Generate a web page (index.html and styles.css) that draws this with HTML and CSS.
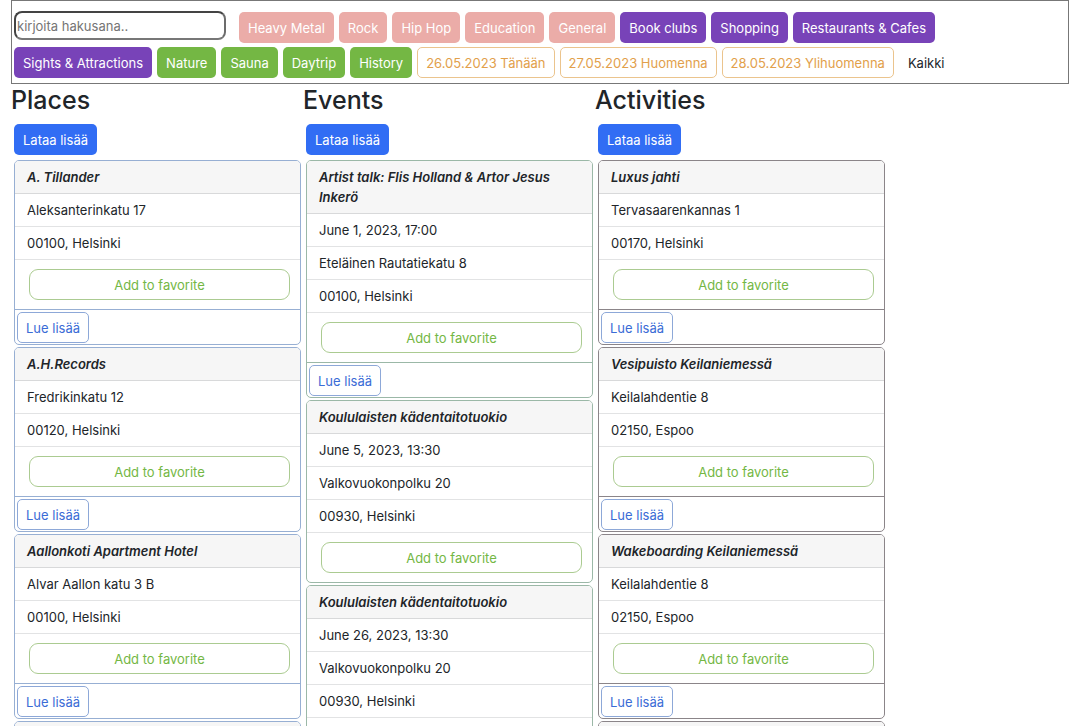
FILE: index.html
```html
<!DOCTYPE html>
<html lang="fi">
<head>
<meta charset="utf-8">
<title>Places, Events, Activities</title>
<link rel="stylesheet" href="styles.css">
</head>
<body>
<main class="page">
  <form class="filters">
    <input class="search" type="text" placeholder="kirjoita hakusana.." aria-label="Hakusana">
    <button type="button" class="btn pink">Heavy Metal</button>
    <button type="button" class="btn pink">Rock</button>
    <button type="button" class="btn pink">Hip Hop</button>
    <button type="button" class="btn pink">Education</button>
    <button type="button" class="btn pink">General</button>
    <button type="button" class="btn purple">Book clubs</button>
    <button type="button" class="btn purple">Shopping</button>
    <button type="button" class="btn purple">Restaurants &amp; Cafes</button>
    <button type="button" class="btn purple">Sights &amp; Attractions</button>
    <button type="button" class="btn green">Nature</button>
    <button type="button" class="btn green">Sauna</button>
    <button type="button" class="btn green">Daytrip</button>
    <button type="button" class="btn green">History</button>
    <button type="button" class="btn date">26.05.2023 Tänään</button>
    <button type="button" class="btn date">27.05.2023 Huomenna</button>
    <button type="button" class="btn date">28.05.2023 Ylihuomenna</button>
    <button type="button" class="btn plain">Kaikki</button>
  </form>
  <div class="columns">
    <section class="column places">
      <h2>Places</h2>
      <button type="button" class="btn load">Lataa lisää</button>
      <div class="cards">
        <article class="card">
          <h3>A. Tillander</h3>
          <p>Aleksanterinkatu 17</p>
          <p>00100, Helsinki</p>
          <div class="favorite"><button type="button" class="btn fav">Add to favorite</button></div>
          <footer><button type="button" class="btn more">Lue lisää</button></footer>
        </article>
        <article class="card">
          <h3>A.H.Records</h3>
          <p>Fredrikinkatu 12</p>
          <p>00120, Helsinki</p>
          <div class="favorite"><button type="button" class="btn fav">Add to favorite</button></div>
          <footer><button type="button" class="btn more">Lue lisää</button></footer>
        </article>
        <article class="card">
          <h3>Aallonkoti Apartment Hotel</h3>
          <p>Alvar Aallon katu 3 B</p>
          <p>00100, Helsinki</p>
          <div class="favorite"><button type="button" class="btn fav">Add to favorite</button></div>
          <footer><button type="button" class="btn more">Lue lisää</button></footer>
        </article>
        <article class="card"><h3></h3></article>
      </div>
    </section>
    <section class="column events">
      <h2>Events</h2>
      <button type="button" class="btn load">Lataa lisää</button>
      <div class="cards">
        <article class="card">
          <h3>Artist talk: Flis Holland &amp; Artor Jesus Inkerö</h3>
          <p>June 1, 2023, 17:00</p>
          <p>Eteläinen Rautatiekatu 8</p>
          <p>00100, Helsinki</p>
          <div class="favorite"><button type="button" class="btn fav">Add to favorite</button></div>
          <footer><button type="button" class="btn more">Lue lisää</button></footer>
        </article>
        <article class="card">
          <h3>Koululaisten kädentaitotuokio</h3>
          <p>June 5, 2023, 13:30</p>
          <p>Valkovuokonpolku 20</p>
          <p>00930, Helsinki</p>
          <div class="favorite"><button type="button" class="btn fav">Add to favorite</button></div>
        </article>
        <article class="card">
          <h3>Koululaisten kädentaitotuokio</h3>
          <p>June 26, 2023, 13:30</p>
          <p>Valkovuokonpolku 20</p>
          <p>00930, Helsinki</p>
          <div class="favorite"></div>
        </article>
      </div>
    </section>
    <section class="column activities">
      <h2>Activities</h2>
      <button type="button" class="btn load">Lataa lisää</button>
      <div class="cards">
        <article class="card">
          <h3>Luxus jahti</h3>
          <p>Tervasaarenkannas 1</p>
          <p>00170, Helsinki</p>
          <div class="favorite"><button type="button" class="btn fav">Add to favorite</button></div>
          <footer><button type="button" class="btn more">Lue lisää</button></footer>
        </article>
        <article class="card">
          <h3>Vesipuisto Keilaniemessä</h3>
          <p>Keilalahdentie 8</p>
          <p>02150, Espoo</p>
          <div class="favorite"><button type="button" class="btn fav">Add to favorite</button></div>
          <footer><button type="button" class="btn more">Lue lisää</button></footer>
        </article>
        <article class="card">
          <h3>Wakeboarding Keilaniemessä</h3>
          <p>Keilalahdentie 8</p>
          <p>02150, Espoo</p>
          <div class="favorite"><button type="button" class="btn fav">Add to favorite</button></div>
          <footer><button type="button" class="btn more">Lue lisää</button></footer>
        </article>
        <article class="card"><h3></h3></article>
      </div>
    </section>
  </div>
</main>
</body>
</html>
```
FILE: styles.css
```css
* {
  box-sizing: border-box;
}

html {
  overflow: hidden;
}

body {
  height: 100vh;
  margin: 0;
  overflow: hidden;
  background: #fff;
  color: #212529;
  font-family: Inter, "Liberation Sans", sans-serif;
  font-size: 13px;
  line-height: 20px;
}

.page {
  padding: 0 14px 0 11px;
}

.filters {
  display: flex;
  flex-wrap: wrap;
  align-items: flex-end;
  gap: 4px 5px;
  padding: 10px 100px 5px 2px;
  border: 1px solid #777;
}

.search {
  width: 212px;
  height: 29px;
  margin: 0 8px 3px 0;
  padding: 0 1px;
  border: 2px solid;
  border-color: #444 #6c6c6c #777 #444;
  border-radius: 8px;
  background: #fff;
  font: inherit;
}

.search::placeholder {
  color: #757575;
}

.btn {
  height: 31px;
  padding: 0 8px;
  border: 1px solid transparent;
  border-radius: 5px;
  background: #fff;
  color: #fff;
  font: inherit;
  white-space: nowrap;
}

.pink {
  background: #ebaca8;
}

.purple {
  background: #7843b8;
}

.green {
  background: #74b744;
}

.date {
  border-color: #ebc48d;
  color: #e2a04b;
}

.plain {
  color: #212529;
}

.columns {
  display: grid;
  grid-template-columns: repeat(3, 292px);
}

.column {
  padding-right: 2px;
}

h2 {
  margin: 0;
  padding: 1px 0 8px;
  font-size: 25px;
  font-weight: 500;
  line-height: 31px;
}

.load {
  display: block;
  margin-left: 3px;
  background: #316df4;
}

.cards {
  display: flex;
  flex-direction: column;
  gap: 2px;
  padding: 5px 0 0 3px;
}

.card {
  --edge: #8b8589;
  overflow: hidden;
  border: 1px solid var(--edge);
  border-radius: 5px;
}

.places .card {
  --edge: #97afd3;
}

.events .card {
  --edge: #9bb8a7;
}

.card h3,
.card p {
  margin: 0;
  padding: 6px 12px;
  min-height: 33px;
  border-bottom: 1px solid #e2e3e4;
}

.card h3 {
  background: #f6f6f6;
  border-color: #d8d9da;
  font-size: 13px;
  font-style: italic;
  font-weight: 600;
}

.favorite {
  min-height: 49px;
  padding: 9px 10px 9px 14px;
}

.fav {
  display: block;
  width: 100%;
  border-color: #abcb91;
  border-radius: 9px;
  color: #74b744;
}

.card footer {
  padding: 2px 2px 1px;
  border-top: 1px solid var(--edge);
}

.more {
  display: block;
  border-color: #8da8d8;
  color: #3a6cd6;
}
```
